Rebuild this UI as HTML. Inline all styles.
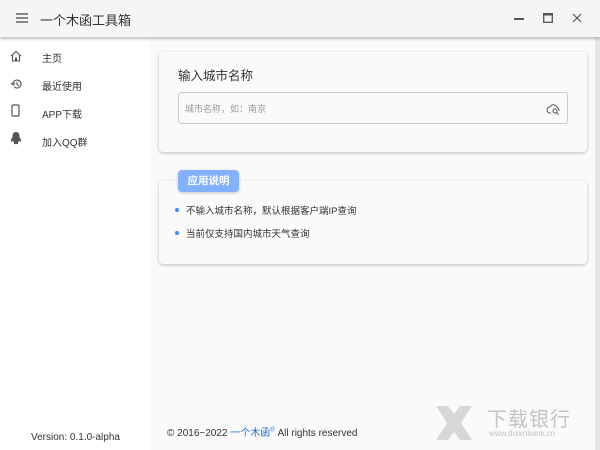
<!DOCTYPE html>
<html><head><meta charset="utf-8"><style>
*{margin:0;padding:0;box-sizing:border-box}
body{width:600px;height:450px;overflow:hidden;background:#fafafa;font-family:"Liberation Sans","Noto Sans CJK SC",sans-serif;position:relative;color:#333}
.hdr{position:absolute;left:0;top:0;width:600px;height:37px;background:#f5f5f5;box-shadow:0 2px 3px rgba(0,0,0,.25);z-index:2}
.side{position:absolute;left:0;top:37px;width:150px;height:413px;background:#fff}
.item{position:absolute;left:0;width:150px;height:20px;font-size:10px;color:#333;white-space:nowrap}
.item span{position:absolute;left:42px;top:4px}
.item svg{position:absolute;left:10px;top:4px}
.card{position:absolute;left:159px;width:428px;background:#fafafa;border-radius:4px;box-shadow:0 1px 3px rgba(0,0,0,.25)}
.sb{position:absolute;right:0;top:37px;width:5px;height:413px;background:#e6e6e6}
</style></head><body>
<div class="hdr">
<svg style="position:absolute;left:16px;top:13px" width="12" height="10"><path d="M0 1h12M0 5h12M0 9h12" stroke="#444" stroke-width="1.2"/></svg>
<div style="position:absolute;left:40px;top:10px;font-size:13px;color:#333">一个木函工具箱</div>
<svg style="position:absolute;left:514px;top:18px" width="10" height="2"><rect width="10" height="2" fill="#555"/></svg>
<svg style="position:absolute;left:543px;top:13px" width="10" height="10"><rect x=".7" y=".7" width="8.6" height="8.6" fill="none" stroke="#555" stroke-width="1.3"/><rect x="0" y="0" width="10" height="2.5" fill="#555"/></svg>
<svg style="position:absolute;left:572px;top:13px" width="10" height="10"><path d="M1 1l8 8M9 1l-8 8" stroke="#555" stroke-width="1.2"/></svg>
</div>
<div class="side">
<div class="item" style="top:9px"><svg width="12" height="12"><path d="M1 6L6 1.5 11 6M2.5 5v6h3V8h1v3h3V5" fill="none" stroke="#555" stroke-width="1.1"/></svg><span>主页</span></div>
<div class="item" style="top:37px"><svg width="13" height="12"><path d="M3 6a4 4 0 1 1 1.2 2.9M1 5l2 2 2-2M7 4v2.5l2 1" fill="none" stroke="#555" stroke-width="1.1"/></svg><span>最近使用</span></div>
<div class="item" style="top:65px"><svg width="12" height="14" style="top:2px"><rect x="2" y="1" width="7" height="11" rx="1" fill="none" stroke="#555" stroke-width="1.2"/></svg><span>APP下载</span></div>
<div class="item" style="top:93px"><svg width="12" height="13" style="top:2px"><path d="M6 0C3 0 2.5 3 2.5 5 1 7 0.5 9 1.5 10c.5-.3 1-1 1.3-1.5.3 1 1 2 1.6 2.5-1 .3-1 1.2 1.6 1.2s2.6-.9 1.6-1.2c.6-.5 1.3-1.5 1.6-2.5.3.5.8 1.2 1.3 1.5 1-1 .5-3-1-5 0-2-.5-5-3.5-5z" fill="#555"/></svg><span>加入QQ群</span></div>
<div style="position:absolute;left:31px;top:395px;font-size:10px;color:#333;white-space:nowrap">Version: 0.1.0-alpha</div>
</div>
<div class="card" style="top:52px;height:100px">
<div style="position:absolute;left:19px;top:13px;font-size:12.5px;color:#333">输入城市名称</div>
<div style="position:absolute;left:19px;top:40px;width:390px;height:32px;border:1px solid #ccc;border-radius:3px;background:#fafafa">
<div style="position:absolute;left:6px;top:9px;font-size:9px;color:#999">城市名称，如：南京</div>
<svg style="position:absolute;right:6px;top:9px" width="15" height="13"><path d="M5 11H4A3 3 0 0 1 4 5a4 4 0 0 1 7.5 1A2.5 2.5 0 0 1 13 9" fill="none" stroke="#555" stroke-width="1"/><circle cx="9" cy="9" r="2" fill="none" stroke="#555" stroke-width="1"/><path d="M10.5 10.5l2 2" stroke="#555"/></svg>
</div>
</div>
<div class="card" style="top:181px;height:83px">
<div style="position:absolute;left:16px;top:27px;width:4px;height:4px;border-radius:2px;background:#448aff"></div>
<div style="position:absolute;left:27px;top:22px;font-size:9.5px;color:#333;white-space:nowrap">不输入城市名称，默认根据客户端IP查询</div>
<div style="position:absolute;left:16px;top:50px;width:4px;height:4px;border-radius:2px;background:#448aff"></div>
<div style="position:absolute;left:27px;top:45px;font-size:9.5px;color:#333;white-space:nowrap">当前仅支持国内城市天气查询</div>
</div>
<div style="position:absolute;left:178px;top:170px;width:61px;height:22px;background:#82b1ff;border-radius:4px;box-shadow:0 1px 3px rgba(0,0,0,.2);color:#fff;font-size:10.5px;font-weight:bold;text-align:center;line-height:22px">应用说明</div>
<div style="position:absolute;left:167px;top:424px;font-size:10px;color:#333;white-space:nowrap">© 2016~2022 <span style="color:#1e6fd9">一个木函</span><sup style="font-size:6px;color:#1e6fd9">®</sup> All rights reserved</div>
<div style="position:absolute;left:435px;top:405px;opacity:.3">
<svg width="38" height="36"><path d="M1 1h12l6 8 6-8h12L26 18l11 17H25l-6-8-6 8H1l11-17z" fill="#888"/></svg></div>
<div style="position:absolute;left:487px;top:403px;font-size:20px;color:#c4c4c4;letter-spacing:1px;white-space:nowrap">下载银行</div>
<div style="position:absolute;left:489px;top:429px;font-size:8px;color:#c4c4c4;white-space:nowrap">www.downbank.cn</div>
<div class="sb"></div>
</body></html>
